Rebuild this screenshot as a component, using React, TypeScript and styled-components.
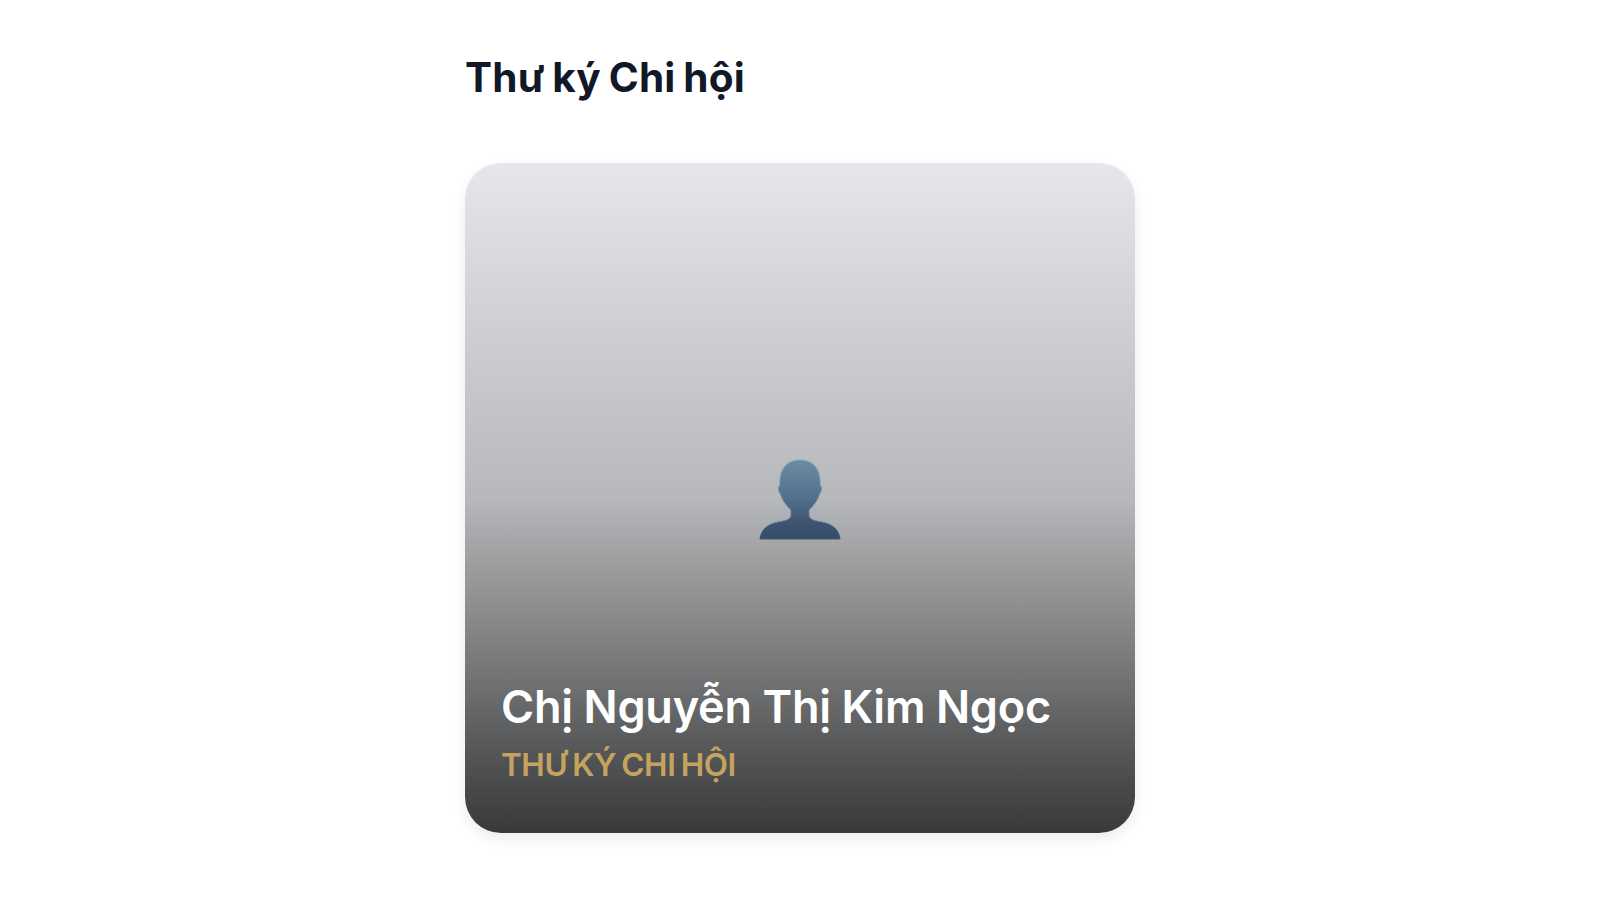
import styled, { createGlobalStyle } from 'styled-components';

const GlobalStyle = createGlobalStyle`
  * {
    box-sizing: border-box;
  }

  body {
    margin: 0;
    background: #fff;
    font-family: Inter, 'Noto Sans', sans-serif;
  }
`;

const Section = styled.section`
  display: flex;
  flex-direction: column;
  gap: 57px;
  width: 670px;
  height: 900px;
  margin: 0 auto;
  padding-top: 50px;
`;

const Heading = styled.h2`
  margin: 0;
  color: #111827;
  font-size: 40.5px;
  font-weight: 700;
  line-height: 56px;
  letter-spacing: 0.2px;
  word-spacing: -2px;
  white-space: nowrap;
`;

const Card = styled.article`
  display: grid;
  height: 670px;
  overflow: hidden;
  border-radius: 36px;
  background: linear-gradient(
    to bottom,
    #e5e7eb 0%,
    #cecfd3 25%,
    #b7b8bc 50%,
    #a4a5a7 57%,
    #8b8c8d 67%,
    #6c6d6f 79%,
    #4d4e50 91%,
    #39393a 100%
  );
  box-shadow: 0 6px 14px rgba(0, 0, 0, 0.08);
`;

const Portrait = styled.div`
  grid-area: 1 / 1;
  place-self: center;
  display: flex;
  padding-top: 4px;

  svg {
    display: block;
  }
`;

const Caption = styled.div`
  grid-area: 1 / 1;
  align-self: end;
  padding: 0 36px 45px;
  white-space: nowrap;
`;

const Name = styled.h3`
  margin: 0;
  color: #fff;
  font-size: 45px;
  font-weight: 600;
  line-height: 62px;
  letter-spacing: -0.25px;
  word-spacing: -0.3px;
`;

const Role = styled.p`
  margin: 4px 0 0;
  color: #c4a35f;
  font-size: 31.5px;
  font-weight: 600;
  line-height: 46px;
  letter-spacing: -0.45px;
  word-spacing: -2.2px;
  text-transform: uppercase;
`;

const Silhouette = () => (
  <svg width="82" height="82" viewBox="0 0 82 82">
    <defs>
      <linearGradient id="bust" x1="0" y1="0" x2="0" y2="1">
        <stop offset="0" stopColor="#6e8ba5" />
        <stop offset="0.5" stopColor="#526e8b" />
        <stop offset="0.8" stopColor="#3d536f" />
        <stop offset="1" stopColor="#374c68" />
      </linearGradient>
      <linearGradient id="rim" x1="0" y1="0" x2="0" y2="1">
        <stop offset="0" stopColor="#83a8ba" />
        <stop offset="0.8" stopColor="#587f94" />
        <stop offset="1" stopColor="#3d536f" />
      </linearGradient>
    </defs>
    <path
      d="M1 80C2 70 9 65 19 63C26 62 32 60.500 32 56V51C27 46 23 41 21.500 35C19.500 33 18.500 28 21 26C20 10 28 1 41 1S62 10 61 26C63.500 28 62.500 33 60.500 35C59 41 55 46 50 51V56C50 60.500 56 62 63 63C73 65 80 70 81 80Z"
      fill="url(#bust)"
      stroke="url(#rim)"
      strokeWidth="1"
    />
  </svg>
);

const App = () => (
  <>
    <GlobalStyle />
    <Section>
      <Heading>Thư ký Chi hội</Heading>
      <Card>
        <Portrait>
          <Silhouette />
        </Portrait>
        <Caption>
          <Name>Chị Nguyễn Thị Kim Ngọc</Name>
          <Role>Thư ký Chi hội</Role>
        </Caption>
      </Card>
    </Section>
  </>
);

export default App;
